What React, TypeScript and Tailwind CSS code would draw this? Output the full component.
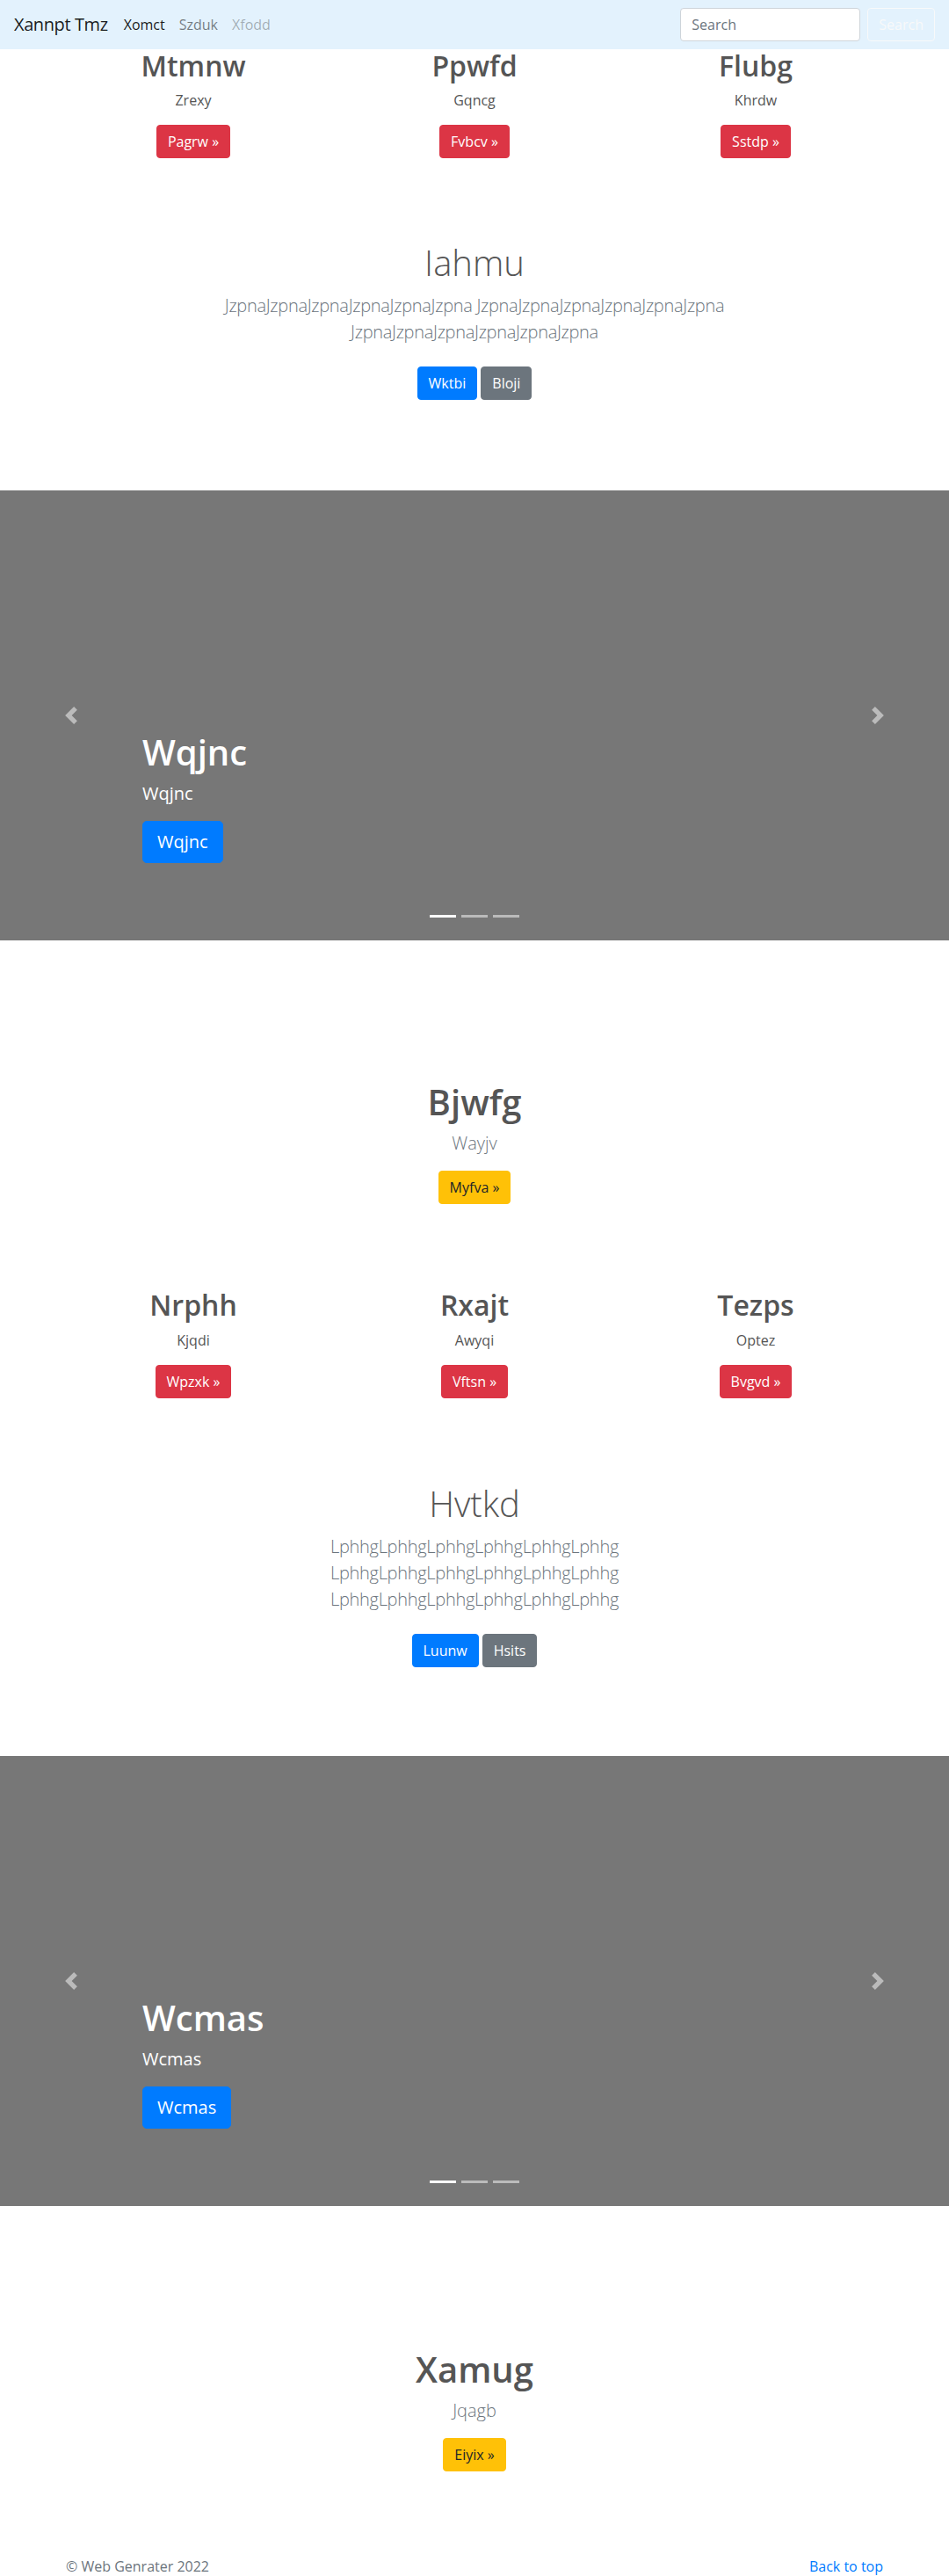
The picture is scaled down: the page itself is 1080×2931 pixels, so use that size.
import React from 'react';

type Tone = 'danger' | 'primary' | 'secondary' | 'warning';

const TONE_CLASSES: Record<Tone, string> = {
    danger: 'bg-[#dc3545] border-[#dc3545] text-white',
    primary: 'bg-[#007bff] border-[#007bff] text-white',
    secondary: 'bg-[#6c757d] border-[#6c757d] text-white',
    warning: 'bg-[#ffc107] border-[#ffc107] text-[#212529]',
};

function Btn({ tone, children }: { tone: Tone; children: React.ReactNode }) {
    return (
        <a
            href="#"
            className={`inline-block rounded-[4px] border px-3 py-1.5 text-base leading-6 ${TONE_CLASSES[tone]}`}
        >
            {children}
        </a>
    );
}

interface Feature {
    title: string;
    text: string;
    action: string;
}

function FeatureRow({ items }: { items: Feature[] }) {
    return (
        <div className="mx-auto grid w-[960px] grid-cols-3">
            {items.map((item) => (
                <div key={item.title} className="px-[15px] text-center">
                    <h2 className="mb-2 text-[32px] font-semibold leading-[38.4px]">{item.title}</h2>
                    <p className="mb-4 text-base leading-6">{item.text}</p>
                    <div className="flex justify-center">
                        <Btn tone="danger">{item.action}</Btn>
                    </div>
                </div>
            ))}
        </div>
    );
}

function Jumbo({
    title,
    lines,
    primary,
    secondary,
}: {
    title: string;
    lines: string;
    primary: string;
    secondary: string;
}) {
    return (
        <section className="text-center">
            <h1 className="mb-[10px] text-[40px] font-light leading-[48px]">{title}</h1>
            <p className="mx-auto max-w-[610px] text-xl font-light leading-[30px] tracking-[-0.015em] text-[#6c757d]">
                {lines}
            </p>
            <div className="mt-6 flex justify-center gap-1">
                <Btn tone="primary">{primary}</Btn>
                <Btn tone="secondary">{secondary}</Btn>
            </div>
        </section>
    );
}

function Hero({ title, text, action }: Feature) {
    return (
        <section className="text-center">
            <h1 className="mb-2 text-[40px] font-semibold leading-[48px]">{title}</h1>
            <p className="mb-4 text-xl font-light leading-[30px] text-[#6c757d]">{text}</p>
            <div className="flex justify-center">
                <Btn tone="warning">{action}</Btn>
            </div>
        </section>
    );
}

function Carousel({ title }: { title: string }) {
    return (
        <div className="relative h-[512px] bg-[#777]">
            <div className="absolute inset-y-0 left-0 flex w-[15%] items-center justify-center opacity-50">
                <svg width="20" height="20" viewBox="0 0 8 8" fill="#fff">
                    <path d="M5.25 0l-4 4 4 4 1.5-1.5L4.25 4l2.5-2.5L5.25 0z" />
                </svg>
            </div>
            <div className="absolute inset-y-0 right-0 flex w-[15%] items-center justify-center opacity-50">
                <svg width="20" height="20" viewBox="0 0 8 8" fill="#fff">
                    <path d="M2.75 0l-1.5 1.5L3.75 4l-2.5 2.5L2.75 8l4-4-4-4z" />
                </svg>
            </div>
            <div className="absolute bottom-[88px] left-[15%] right-[15%] text-left text-white">
                <h1 className="mb-2 text-[40px] font-semibold leading-[48px]">{title}</h1>
                <p className="mb-4 text-xl font-medium leading-[30px]">{title}</p>
                <div className="flex">
                    <a
                        href="#"
                        className="inline-block rounded-[5px] border border-[#007bff] bg-[#007bff] px-4 py-2 text-xl leading-[30px] text-white"
                    >
                        {title}
                    </a>
                </div>
            </div>
            <div className="absolute bottom-[26px] left-0 right-0 flex justify-center gap-[6px]">
                <span className="h-[3px] w-[30px] bg-white" />
                <span className="h-[3px] w-[30px] bg-white opacity-50" />
                <span className="h-[3px] w-[30px] bg-white opacity-50" />
            </div>
        </div>
    );
}

export default function App() {
    return (
        <div className="bg-white font-['Open_Sans',sans-serif] text-base text-[#555]">
            <nav className="flex h-14 items-center bg-[#e3f2fd] px-4">
                <span className="mr-[10px] text-xl leading-[30px] tracking-[-0.02em] text-black/90">Xannpt Tmz</span>
                <ul className="flex">
                    <li className="px-2 text-black/90">Xomct</li>
                    <li className="px-2 text-black/50">Szduk</li>
                    <li className="px-2 text-black/30">Xfodd</li>
                </ul>
                <div className="ml-auto flex items-center">
                    <div className="flex h-[38px] w-[205px] items-center rounded-[4px] border border-[#ced4da] bg-white px-3 text-[#6c757d]">
                        Search
                    </div>
                    <div className="ml-2 flex h-[38px] items-center rounded-[4px] border border-[#f8f9fa] px-3 text-[#f8f9fa]">
                        Search
                    </div>
                </div>
            </nav>

            <FeatureRow
                items={[
                    { title: 'Mtmnw', text: 'Zrexy', action: 'Pagrw »' },
                    { title: 'Ppwfd', text: 'Gqncg', action: 'Fvbcv »' },
                    { title: 'Flubg', text: 'Khrdw', action: 'Sstdp »' },
                ]}
            />

            <div className="pt-[95px] pb-[103px]">
                <Jumbo
                    title="Iahmu"
                    lines="JzpnaJzpnaJzpnaJzpnaJzpnaJzpna JzpnaJzpnaJzpnaJzpnaJzpnaJzpna JzpnaJzpnaJzpnaJzpnaJzpnaJzpna"
                    primary="Wktbi"
                    secondary="Bloji"
                />
            </div>

            <Carousel title="Wqjnc" />

            <div className="pt-[160px] pb-[96px]">
                <Hero title="Bjwfg" text="Wayjv" action="Myfva »" />
            </div>

            <FeatureRow
                items={[
                    { title: 'Nrphh', text: 'Kjqdi', action: 'Wpzxk »' },
                    { title: 'Rxajt', text: 'Awyqi', action: 'Vftsn »' },
                    { title: 'Tezps', text: 'Optez', action: 'Bvgvd »' },
                ]}
            />

            <div className="pt-[96px] pb-[101px]">
                <Jumbo
                    title="Hvtkd"
                    lines="LphhgLphhgLphhgLphhgLphhgLphhg LphhgLphhgLphhgLphhgLphhgLphhg LphhgLphhgLphhgLphhgLphhgLphhg"
                    primary="Luunw"
                    secondary="Hsits"
                />
            </div>

            <Carousel title="Wcmas" />

            <div className="pt-[162px] pb-[96px]">
                <Hero title="Xamug" text="Jqagb" action="Eiyix »" />
            </div>

            <footer className="mx-auto flex w-[960px] justify-between px-[15px] leading-6 text-[#6c757d]">
                <p>© Web Genrater 2022</p>
                <a href="#" className="text-[#007bff]">
                    Back to top
                </a>
            </footer>
        </div>
    );
}
